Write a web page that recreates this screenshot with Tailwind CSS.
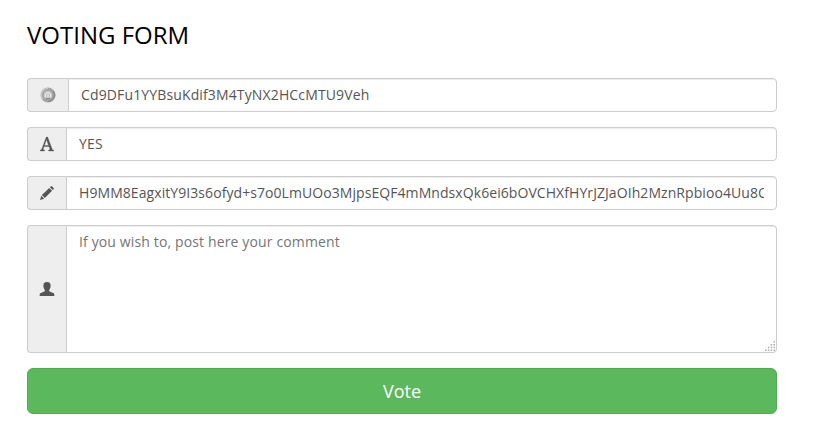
<!DOCTYPE html>
<html lang="en">
<head>
<meta charset="utf-8">
<title>Voting form</title>
<script src="https://cdn.jsdelivr.net/npm/@tailwindcss/browser@4"></script>
</head>
<body class="bg-white font-['Open_Sans',sans-serif] text-[14px] leading-5 text-[#555]">
<main class="ml-[27px] w-[750px] pt-[22px]">
  <h1 class="mb-[30px] text-[24px] leading-[26px] text-black">VOTING FORM</h1>
  <form class="flex flex-col gap-[15px]">
    <div class="flex h-[34px]">
      <span class="flex w-[41px] shrink-0 items-center justify-center rounded-l border border-r-0 border-[#ccc] bg-[#eee]">
        <svg class="size-4" viewBox="0 0 16 16">
          <circle cx="8" cy="8" r="7.500" fill="#a6a6a6"/>
          <path d="M3 12A6.300 6.300 0 0 1 8 1.700" fill="none" stroke="#c8c8c8" stroke-width="1.300"/>
          <path d="M13 4a6.300 6.300 0 0 1-5 10.300" fill="none" stroke="#8c8c8c" stroke-width="1.500"/>
          <circle cx="8" cy="8" r="4.900" fill="#c2c2c2" stroke="#939393" stroke-width=".8"/>
          <path d="M5.300 10.500V6.500M7 7.500V5M9 7.500V5M10.700 10.500V6.500M8 8v2.500" fill="none" stroke="#ededed" stroke-width="1.100"/>
          <path d="M6 11.500h4" stroke="#8b8b8b"/>
        </svg>
      </span>
      <input class="w-0 grow rounded-r border border-[#ccc] bg-white px-3 py-1.5 tracking-[0.135px] shadow-[inset_0_1px_1px_rgba(0,0,0,0.075)]" value="Cd9DFu1YYBsuKdif3M4TyNX2HCcMTU9Veh">
    </div>
    <div class="flex h-[34px]">
      <span class="flex w-[39px] shrink-0 items-center justify-center rounded-l border border-r-0 border-[#ccc] bg-[#eee]">
        <svg class="h-[14px] w-[14px] overflow-visible" viewBox="0 0 14 14" fill="#555" stroke="#555" stroke-width=".35"><path d="M6.300 0h1.300l4.600 12.200q.3.800 1.500.9v.9H8.600v-.9q1.700-.1 1.300-1.200l-.9-2.500H4.100l-.8 2.300q-.4 1.300 1.200 1.400v.9H.3v-.9q1.200-.2 1.600-1.300ZM6.500 2.600 4.400 8.400h4.200Z"/></svg>
      </span>
      <input class="w-0 grow rounded-r border border-[#ccc] bg-white px-3 py-1.5 tracking-[0.135px] shadow-[inset_0_1px_1px_rgba(0,0,0,0.075)]" value="YES">
    </div>
    <div class="flex h-[34px]">
      <span class="flex w-[39px] shrink-0 items-center justify-center rounded-l border border-r-0 border-[#ccc] bg-[#eee]">
        <svg class="h-[14px] w-[14px]" viewBox="0 0 14 14" fill="#555"><path d="M0 14l1.300-4.200 2.900 2.900ZM1.900 9.100 9.200 1.900l2.900 2.900-7.300 7.300ZM9.900 1.200l.8-.8q.6-.6 1.300 0l1.600 1.600q.6.600 0 1.300l-.8.800Z"/></svg>
      </span>
      <input class="w-0 grow rounded-r border border-[#ccc] bg-white px-3 py-1.5 tracking-[0.07px] shadow-[inset_0_1px_1px_rgba(0,0,0,0.075)]" value="H9MM8EagxitY9I3s6ofyd+s7o0LmUOo3MjpsEQF4mMndsxQk6ei6bOVCHXfHYrJZJaOIh2MznRpbioo4Uu8OGk2">
    </div>
    <div class="relative flex h-32">
      <span class="flex w-[39px] shrink-0 items-center justify-center rounded-l border border-r-0 border-[#ccc] bg-[#eee]">
        <svg class="h-[14px] w-[14px] overflow-visible" viewBox="0 0 14 14" fill="#555"><path d="M-.3 14v-1.900q0-.6.6-.9l4-1.600q.6-.3.500-1V8Q3.400 6.500 3.400 4V3.200Q3.600 0 7 0t3.600 3.200V4q0 2.500-1.400 4v.6q-.1.700.5 1l4 1.600q.6.300.6.900V14Z"/></svg>
      </span>
      <textarea class="w-0 grow resize-none rounded-r border border-[#ccc] bg-white px-3 py-1.5 tracking-[0.135px] shadow-[inset_0_1px_1px_rgba(0,0,0,0.075)] placeholder:text-[#757575]" placeholder="If you wish to, post here your comment"></textarea>
      <svg class="absolute right-[2px] bottom-[2px] size-[10px]" viewBox="0 0 10 10" fill="#aaa"><path d="M8.500 0H10v1.500H8.500zM5.700 3h1.500v1.500H5.700zM8.500 3H10v1.500H8.500zM2.900 5.700h1.500v1.500H2.900zM5.700 5.700h1.500v1.500H5.700zM8.500 5.700H10v1.500H8.500zM0 8.500h1.500V10H0zM2.900 8.500h1.500V10H2.900zM5.700 8.500h1.500V10H5.700zM8.500 8.500H10V10H8.500z"/></svg>
    </div>
    <button type="button" class="h-[46px] rounded-md border border-[#4cae4c] bg-[#5cb85c] text-[18px] leading-6 text-white">Vote</button>
  </form>
</main>
</body>
</html>
